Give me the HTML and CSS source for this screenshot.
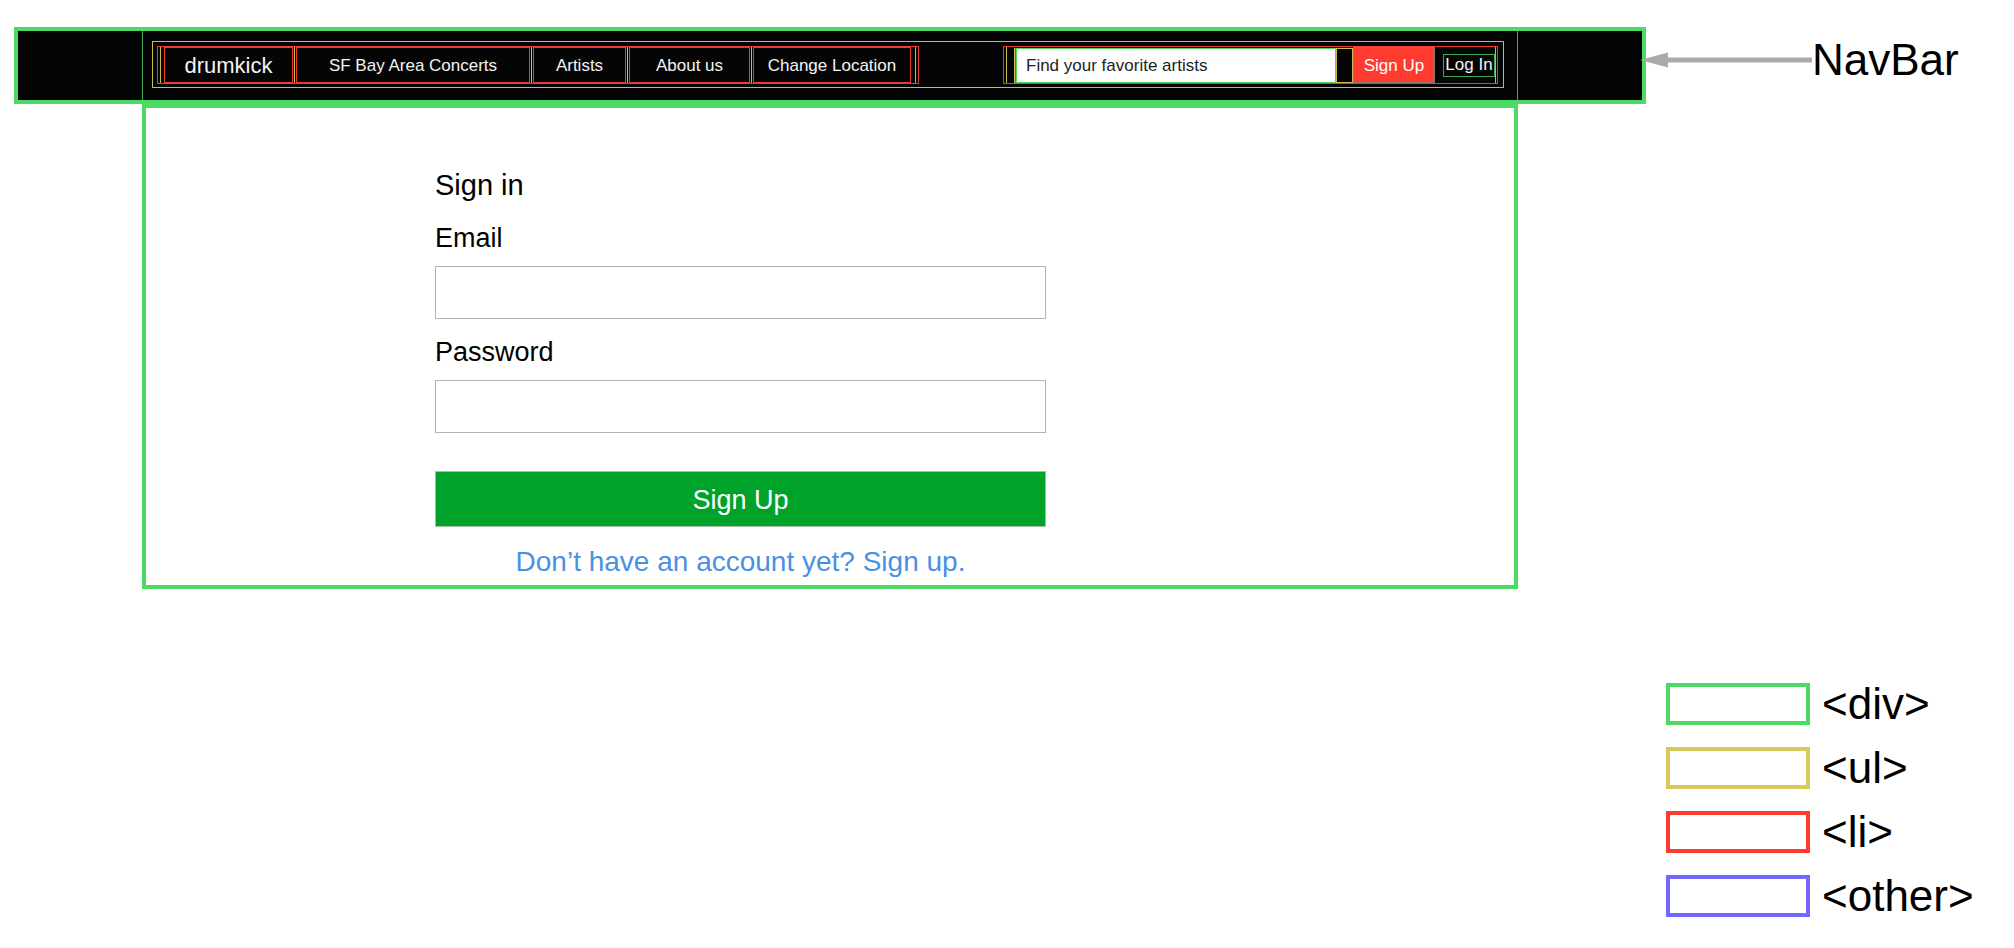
FILE: index.html
```html
<!DOCTYPE html>
<html lang="en">
<head>
<meta charset="utf-8">
<title>drumkick – Sign in wireframe</title>
<link rel="stylesheet" href="styles.css">
</head>
<body>
<div class="page">
  <div class="top-row">
    <div class="navbar">
      <div class="nav-container">
        <ul class="nav-list">
          <li class="nav-group">
            <ul class="nav-inner">
              <li class="nav-item brand">drumkick</li>
              <li class="nav-item w-concerts">SF Bay Area Concerts</li>
              <li class="nav-item w-artists">Artists</li>
              <li class="nav-item w-about">About us</li>
              <li class="nav-item w-location">Change Location</li>
            </ul>
          </li>
          <li class="nav-group">
            <ul class="nav-inner search-inner">
              <li class="search-item"><input class="search-input" type="text" placeholder="Find your favorite artists"></li>
              <li class="spacer-item"></li>
              <li class="signup-item">Sign Up</li>
              <li class="login-item">Log In</li>
            </ul>
          </li>
        </ul>
      </div>
    </div>
    <div class="annotation">
      <svg class="arrow" width="172" height="16" viewBox="0 0 172 16">
        <rect x="26" y="5.5" width="146" height="5" fill="#aaaaaa"/>
        <polygon points="0,8 28,0.5 28,15.5" fill="#aaaaaa"/>
      </svg>
      <span class="annotation-label">NavBar</span>
    </div>
  </div>

  <div class="content">
    <form class="signin-form">
      <h1 class="form-title">Sign in</h1>
      <label class="form-label" for="email">Email</label>
      <input class="form-input" id="email" type="email">
      <label class="form-label" for="password">Password</label>
      <input class="form-input" id="password" type="password">
      <button class="form-button" type="button">Sign Up</button>
      <a class="form-link" href="#">Don’t have an account yet? Sign up.</a>
    </form>
  </div>

  <div class="legend">
    <div class="legend-row"><span class="legend-box box-div"></span><span class="legend-text">&lt;div&gt;</span></div>
    <div class="legend-row"><span class="legend-box box-ul"></span><span class="legend-text">&lt;ul&gt;</span></div>
    <div class="legend-row"><span class="legend-box box-li"></span><span class="legend-text">&lt;li&gt;</span></div>
    <div class="legend-row"><span class="legend-box box-other"></span><span class="legend-text">&lt;other&gt;</span></div>
  </div>
</div>
</body>
</html>
```

FILE: styles.css
```css
* {
  box-sizing: border-box;
}

html, body {
  margin: 0;
  padding: 0;
  background: #ffffff;
}

body {
  font-family: "Liberation Sans", Arial, Helvetica, sans-serif;
  color: #000;
}

ul {
  list-style: none;
  margin: 0;
  padding: 0;
}

.page {
  padding-top: 27px;
}

/* ---------- top row: navbar + annotation ---------- */
.top-row {
  display: flex;
  align-items: flex-start;
}

.navbar {
  margin-left: 14px;
  width: 1632px;
  height: 77px;
  border: 4px solid #4cd964;
  background: #050505;
}

.nav-container {
  width: 1376px;
  height: 100%;
  margin: 0 auto;
  border-left: 1px solid #3fae50;
  border-right: 1px solid #3fae50;
  padding: 10px 13px 0 9px;
}

.nav-list {
  display: flex;
  justify-content: space-between;
  border: 1px solid #c9bc4c;
  padding: 4px 5px 3px 4px;
}

.nav-group {
  height: 38px;
  border: 1px solid #f0392e;
  padding: 0 2px;
}

.nav-group:last-child {
  padding: 0 1px 0 2px;
}

.nav-inner {
  display: flex;
  align-items: center;
  height: 100%;
  border-left: 1px solid #c9bc4c;
  border-right: 1px solid #c9bc4c;
  padding: 0 4px 0 3px;
  gap: 3px;
}

.nav-item {
  height: 36px;
  border: 1px solid #f0392e;
  display: flex;
  align-items: center;
  justify-content: center;
  padding-top: 1px;
  color: #f4f4f4;
  font-size: 17px;
  white-space: nowrap;
}

.nav-item + .nav-item {
  box-shadow: -1px 0 0 #050505, -2px 0 0 #c9bc4c;
}

.brand {
  width: 129px;
  font-size: 22px;
}

.w-concerts { width: 234px; }
.w-artists { width: 93px; }
.w-about { width: 121px; }
.w-location { width: 158px; }

.search-inner {
  gap: 0;
  padding: 0 0 0 9px;
}

.search-item {
  display: flex;
  align-items: center;
}

.search-input {
  width: 320px;
  height: 35px;
  margin: 0;
  border: 1px solid #4cd964;
  background: #ffffff;
  padding: 1px 0 0 9px;
  font-family: "Liberation Sans", Arial, sans-serif;
  font-size: 17px;
  color: #1e1e1e;
  outline: none;
  box-shadow: -1px 0 0 #f0392e, -2px 0 0 #c9bc4c;
}

.search-input::placeholder {
  color: #1e1e1e;
  opacity: 1;
}

.spacer-item {
  width: 17px;
  height: 35px;
  border: 1px solid #c9bc4c;
}

.signup-item {
  width: 82px;
  height: 36px;
  background: #ff3b30;
  border: 1px solid #8c7a6a;
  color: #ffffff;
  font-size: 17px;
  display: flex;
  align-items: center;
  justify-content: center;
  padding-top: 1px;
  white-space: nowrap;
}

.login-item {
  margin-left: 8px;
  width: 52px;
  height: 23px;
  border: 1px solid #3fae50;
  color: #f4f4f4;
  font-size: 17px;
  display: flex;
  align-items: center;
  justify-content: center;
  white-space: nowrap;
}

/* ---------- annotation ---------- */
.annotation {
  display: flex;
  align-items: center;
  margin-left: -6px;
  margin-top: 11px;
}

.arrow {
  display: block;
  flex: none;
}

.annotation-label {
  font-size: 44px;
  line-height: 44px;
  color: #000;
}

/* ---------- content ---------- */
.content {
  margin-left: 142px;
  width: 1376px;
  border: 4px solid #4cd964;
  padding-bottom: 9px;
}

.signin-form {
  margin-left: 289px;
  width: 611px;
  padding-top: 63px;
  display: flex;
  flex-direction: column;
}

.form-title {
  margin: 0;
  font-size: 29px;
  line-height: 29px;
  font-weight: normal;
}

.form-label {
  display: block;
  margin-top: 25px;
  font-size: 27px;
  line-height: 27px;
}

.form-input + .form-label {
  margin-top: 20px;
}

.form-input {
  display: block;
  margin: 14px 0 0;
  width: 611px;
  height: 53px;
  border: 1px solid #b4b4b4;
  background: #fff;
  font-size: 20px;
  padding: 0 10px;
}

.form-button {
  margin-top: 38px;
  width: 611px;
  height: 56px;
  background: #00a32a;
  border: 1px solid #a7bfa7;
  color: #ffffff;
  font-family: "Liberation Sans", Arial, sans-serif;
  font-size: 27px;
  padding: 3px 0 0;
  cursor: pointer;
}

.form-link {
  margin-top: 21px;
  text-align: center;
  font-size: 28px;
  line-height: 28px;
  color: #4a90e2;
  text-decoration: none;
}

/* ---------- legend ---------- */
.legend {
  margin-top: 93px;
  margin-left: 1666px;
  display: flex;
  flex-direction: column;
  gap: 20px;
}

.legend-row {
  display: flex;
  align-items: center;
  gap: 12px;
}

.legend-box {
  width: 144px;
  height: 42px;
  border: 4px solid;
  flex: none;
}

.box-div { border-color: #4cd964; }
.box-ul { border-color: #d6c95a; }
.box-li { border-color: #ff3b30; }
.box-other { border-color: #7566ff; }

.legend-text {
  font-size: 44px;
  line-height: 44px;
  color: #000;
  white-space: nowrap;
}
```
